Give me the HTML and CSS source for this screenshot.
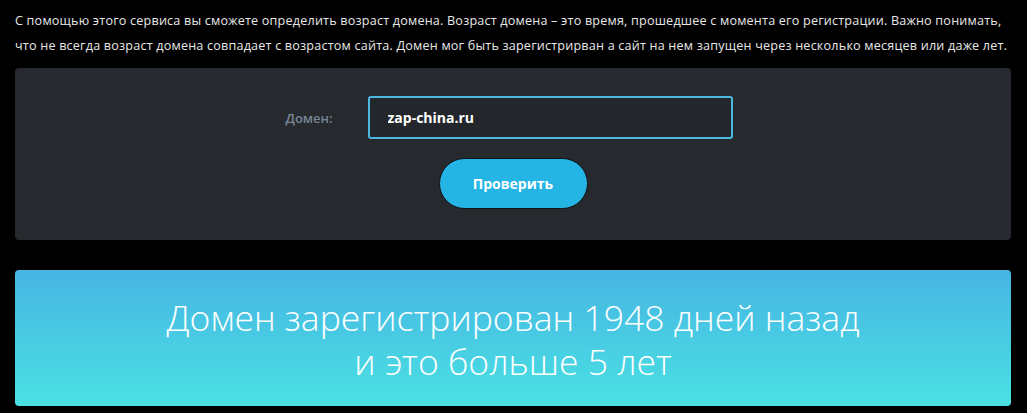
FILE: index.html
```html
<!DOCTYPE html>
<html lang="ru">
<head>
<meta charset="utf-8">
<title>Возраст домена</title>
<link rel="stylesheet" href="styles.css">
</head>
<body>
<div class="page">
  <p class="intro">С помощью этого сервиса вы сможете определить возраст домена. Возраст домена – это время, прошедшее с момента его регистрации. Важно понимать, что не всегда возраст домена совпадает с возрастом сайта. Домен мог быть зарегистрирван а сайт на нем запущен через несколько месяцев или даже лет.</p>
  <form class="card">
    <div class="row">
      <label class="label" for="domain">Домен:</label>
      <input class="input" id="domain" type="text" value="zap-china.ru">
    </div>
    <button class="btn" type="button">Проверить</button>
  </form>
  <div class="result">
    <div class="result-text">Домен зарегистрирован 1948 дней назад<br>и это больше 5 лет</div>
  </div>
</div>
</body>
</html>
```
FILE: styles.css
```css
html, body {
  margin: 0;
  padding: 0;
  background: #000;
}
body {
  font-family: "Open Sans", "Noto Sans", sans-serif;
  color: #e6e6e6;
}
.page {
  padding: 8px 16px 0 15px;
}
.intro {
  margin: 0;
  font-size: 12.6px;
  line-height: 25px;
  font-weight: 500;
  color: #e8e8e8;
  letter-spacing: 0.2px;
}
.card {
  margin: 10px 0 0;
  background: #262a2f;
  border-radius: 4px;
  height: 172px;
  box-sizing: border-box;
  padding-top: 28px;
  display: flex;
  flex-direction: column;
  align-items: center;
}
.row {
  display: flex;
  align-items: center;
  margin-left: -8px;
}
.label {
  width: 82px;
  font-size: 13px;
  font-weight: 600;
  color: #7a8595;
}
.input {
  width: 365px;
  height: 43px;
  box-sizing: border-box;
  border: 2px solid #4bb8e2;
  border-radius: 3px;
  background: #23262b;
  color: #fff;
  font-family: inherit;
  font-weight: 700;
  font-size: 14px;
  padding: 0 18px;
  outline: none;
}
.btn {
  margin-top: 19px;
  width: 149px;
  height: 51px;
  border-radius: 26px;
  border: 1px solid #0d1215;
  background: #25b5e5;
  color: #fff;
  font-family: inherit;
  font-weight: 700;
  font-size: 14px;
  cursor: pointer;
}
.result {
  margin-top: 30px;
  height: 136px;
  border-radius: 4px;
  background: linear-gradient(to bottom, #47b5e3, #49e1e3);
  display: flex;
  align-items: center;
  justify-content: center;
}
.result-text {
  text-align: center;
  color: #fff;
  font-size: 35.5px;
  line-height: 44px;
  font-weight: 300;
  padding-top: 2px;
}
```
